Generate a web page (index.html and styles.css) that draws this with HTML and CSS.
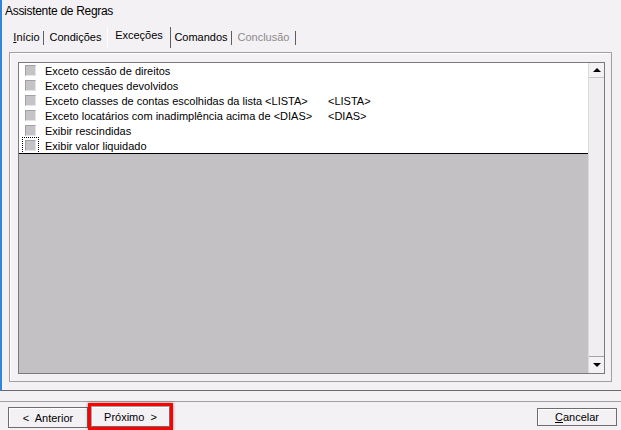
FILE: index.html
```html
<!DOCTYPE html>
<html lang="pt">
<head>
<meta charset="utf-8">
<title>Assistente de Regras</title>
<link rel="stylesheet" href="styles.css">
</head>
<body>
<div class="window">
  <div class="main">
    <div class="title">Assistente de Regras</div>
    <div class="tabs">
      <div class="tab t1"><span class="u">I</span>nício</div>
      <div class="tab t2 nosep">Condições</div>
      <div class="tab t3 active">Exceções</div>
      <div class="tab t4">Comandos</div>
      <div class="tab t5 disabled">Conclusão</div>
    </div>
    <div class="page">
      <div class="listbox">
        <div class="items">
          <div class="rows">
            <div class="row"><span class="chk"></span><span class="lbl">Exceto cessão de direitos</span></div>
            <div class="row"><span class="chk"></span><span class="lbl">Exceto cheques devolvidos</span></div>
            <div class="row"><span class="chk"></span><span class="lbl">Exceto classes de contas escolhidas da lista &lt;LISTA&gt;</span><span class="val">&lt;LISTA&gt;</span></div>
            <div class="row"><span class="chk"></span><span class="lbl">Exceto locatários com inadimplência acima de &lt;DIAS&gt;</span><span class="val">&lt;DIAS&gt;</span></div>
            <div class="row"><span class="chk"></span><span class="lbl">Exibir rescindidas</span></div>
            <div class="row"><span class="chk focus"></span><span class="lbl">Exibir valor liquidado</span></div>
          </div>
          <div class="filler"></div>
        </div>
        <div class="scrollbar">
          <div class="sbtn up"><span class="arrow-up"></span></div>
          <div class="track"></div>
          <div class="sbtn down"><span class="arrow-down"></span></div>
        </div>
      </div>
    </div>
  </div>
  <div class="footer">
    <div class="buttons">
      <div class="btn prev">&lt;&nbsp; Anterior</div>
      <div class="highlight"><div class="btn next">Próximo &nbsp;&gt;</div></div>
      <div class="btn cancel"><span class="u">C</span>ancelar</div>
    </div>
  </div>
</div>
</body>
</html>
```

FILE: styles.css
```css
* { box-sizing: border-box; }
html, body { margin: 0; padding: 0; }
body {
  background: #f4f1f4;
  font-family: "Liberation Sans", Arial, sans-serif;
  font-size: 11px;
  color: #000;
}
.window {
  width: 621px;
  height: 430px;
  overflow: hidden;
  background: #f4f1f4;
}
.main {
  height: 391px;
  border-left: 2px solid #2f86dc;
  border-bottom: 1px solid #6a6a6a;
}
.title {
  height: 24px;
  line-height: 22px;
  padding-left: 3px;
  font-size: 12px;
  letter-spacing: -0.3px;
}
.tabs {
  height: 28px;
  display: flex;
  align-items: flex-start;
  padding-left: 8px;
}
.tab {
  margin-top: 7px;
  height: 14px;
  line-height: 13px;
  text-align: center;
  border-right: 1px solid #5e5e5e;
  white-space: nowrap;
}
.tab.nosep { border-right: none; }
.tab.active {
  margin-top: 3px;
  height: 21px;
  line-height: 16px;
  border-left: 1px solid #ffffff;
}
.t1 { width: 34px; }
.t2 { width: 63px; }
.t3 { width: 64px; }
.t4 { width: 61px; }
.t5 { width: 64px; }
.tab.disabled { color: #8d8a8d; }
.u { text-decoration: underline; }

.page {
  margin-left: 7px;
  width: 603px;
  height: 330px;
  border: 1px solid #a0a0a0;
  box-shadow: inset 1px 1px 0 #ffffff;
  padding: 9px 0 0 8px;
}
.listbox {
  width: 587px;
  height: 312px;
  border: 1px solid #7a7a7a;
  display: flex;
  background: #ffffff;
}
.items {
  width: 569px;
  display: flex;
  flex-direction: column;
}
.rows {
  border-bottom: 1px solid #000;
}
.row {
  height: 15px;
  display: flex;
  align-items: center;
  padding-left: 6px;
  white-space: nowrap;
}
.chk {
  width: 11px;
  height: 11px;
  flex: none;
  background: #c6c3c6;
  border: 1px solid;
  border-color: #a3a0a3 #e6e3e6 #e6e3e6 #a3a0a3;
  margin-right: 9px;
}
.chk.focus {
  outline: 1px dotted #000;
  outline-offset: 2px;
}
.lbl {
  width: 283px;
  flex: none;
}
.filler {
  flex: 1;
  background: #c3c1c3;
}
.scrollbar {
  width: 16px;
  display: flex;
  flex-direction: column;
  background: #f1eef1;
  border-left: 1px solid #dddadd;
}
.sbtn {
  height: 15px;
  display: flex;
  align-items: center;
  justify-content: center;
  background: #f4f1f4;
}
.sbtn.up { border-bottom: 1px solid #c8c5c8; }
.sbtn.down { height: 17px; border-top: 1px solid #a6a3a6; }
.track { flex: 1; }
.arrow-up {
  width: 0; height: 0;
  border-left: 4px solid transparent;
  border-right: 4px solid transparent;
  border-bottom: 4px solid #000;
}
.arrow-down {
  width: 0; height: 0;
  border-left: 4px solid transparent;
  border-right: 4px solid transparent;
  border-top: 4px solid #000;
}

.footer {
  margin-top: 10px;
  border-top: 1px solid #a0a0a0;
  height: 29px;
}
.buttons {
  display: flex;
  align-items: flex-start;
  padding-left: 8px;
  padding-right: 4px;
}
.btn {
  border: 1px solid #6d6d6d;
  box-shadow: inset 1px 1px 0 #ffffff;
  display: flex;
  align-items: center;
  justify-content: center;
  white-space: nowrap;
  background: #f4f1f4;
}
.prev {
  margin-top: 5px;
  width: 80px;
  height: 21px;
}
.highlight {
  margin-top: 1px;
  width: 85px;
  height: 27px;
  border: 3px solid #ff0000;
  box-shadow: 0 0 3px rgba(0, 0, 0, 0.45);
}
.next {
  width: 79px;
  height: 21px;
  border-color: #a8a5a8 #6d6d6d #6d6d6d #a8a5a8;
}
.cancel {
  margin-left: auto;
  margin-top: 6px;
  width: 80px;
  height: 18px;
}
```
